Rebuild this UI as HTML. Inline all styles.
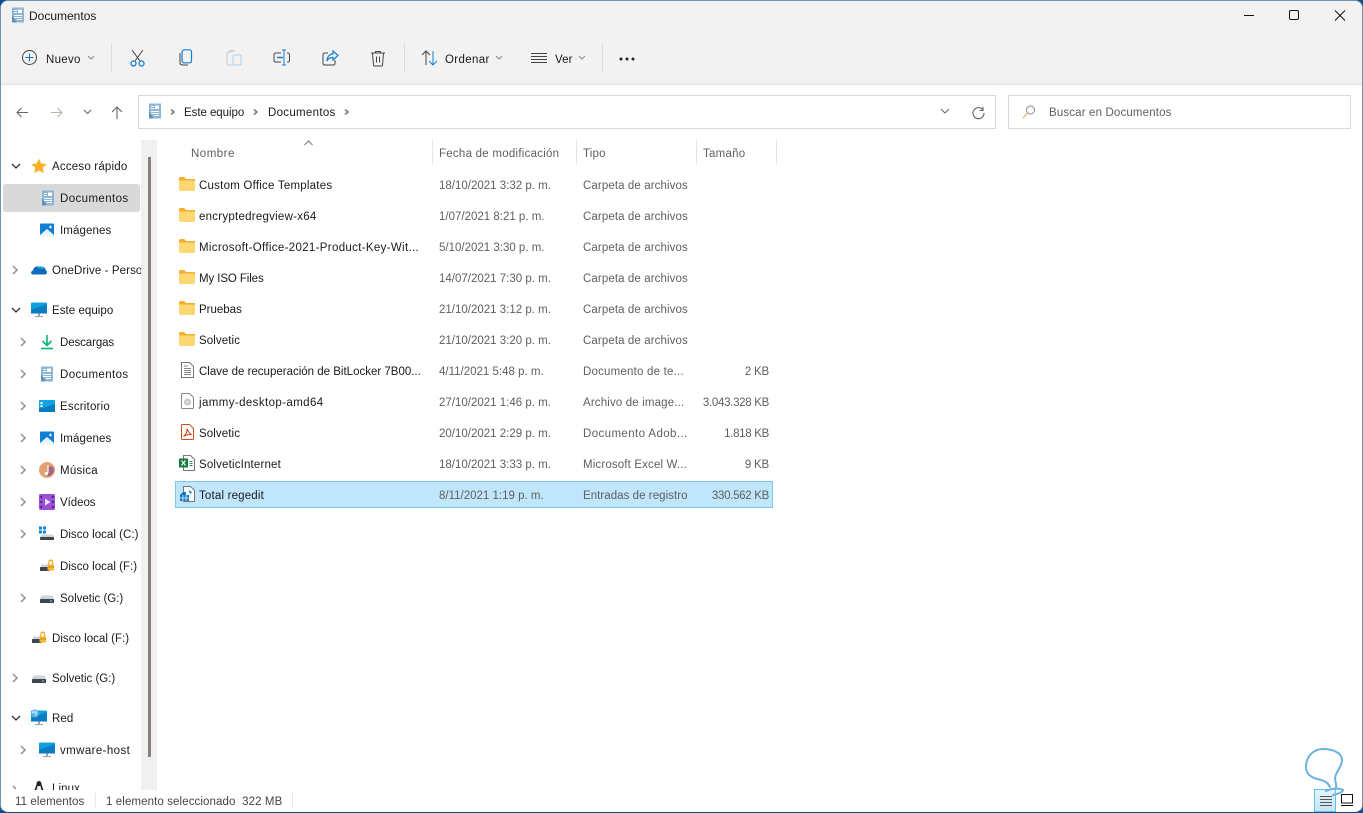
<!DOCTYPE html>
<html><head><meta charset="utf-8"><title>Documentos</title>
<style>
html,body{margin:0;padding:0;width:1363px;height:813px;overflow:hidden;background:#0b4f8f}
body{position:relative;font-family:"Liberation Sans",sans-serif;font-size:11.5px;color:#1a1a1a}
#win{position:absolute;left:0;top:0;width:1361px;height:811px;background:#fff;border:1px solid #6f93ad;border-bottom:1px solid #0b4f8f;border-radius:8px;overflow:hidden}
.a{position:absolute}
.t{position:absolute;white-space:nowrap;line-height:16px;height:16px;margin-top:1px;letter-spacing:.1px}
.g{color:#5f5f5f}
.d{letter-spacing:0}
svg{position:absolute;overflow:visible}
</style></head><body>
<svg width="0" height="0" style="position:absolute"><defs>
<symbol id="doc" viewBox="0 0 16 16"><path d="M2 .5h12v15H4.500L2 13z" fill="#8db6d6"/><path d="M2 8l4.500 7.500H2z" fill="#5e8fb5"/><path d="M8 2.500h4v3.500H8zM4 3h3v1H4zM4 5h3v1H4zM4 8h8v1H4zM4 10h8v1H4zM7 12h5v1H7z" fill="#fff"/></symbol>
<symbol id="img" viewBox="0 0 16 16"><rect x="1" y="1.500" width="14" height="13" rx="1" fill="#0f7fd6"/><path d="M1 13l7-6 7 6v1.500H1z" fill="#e8f4fc"/><path d="M11.500 3l.6 1.400 1.400.6-1.400.6-.6 1.400-.6-1.400-1.400-.6 1.400-.6z" fill="#fff"/></symbol>
<symbol id="folder" viewBox="0 0 16 16"><path d="M0 2.500C0 1.700.6 1 1.400 1h3.800l1.800 2H16v2H0z" fill="#f2b02c"/><path d="M0 4.500h14.500c.8 0 1.500.7 1.500 1.500v7.500c0 .8-.7 1.500-1.500 1.500h-13C.7 15 0 14.300 0 13.500z" fill="#fcd772"/></symbol>
<symbol id="chevR" viewBox="0 0 8 10"><path d="M2 1l4 4-4 4" fill="none" stroke="#909090" stroke-width="1.500"/></symbol>
<symbol id="chevS" viewBox="0 0 8 10"><path d="M2 2.500l3 2.500-3 2.500" fill="none" stroke="#777" stroke-width="1.500"/></symbol>
<symbol id="chevD" viewBox="0 0 10 8"><path d="M1 2l4 4 4-4" fill="none" stroke="#333" stroke-width="1.300"/></symbol>
<symbol id="small" viewBox="0 0 8 6"><path d="M1 1l3 3 3-3" fill="none" stroke="#8a8a8a" stroke-width="1"/></symbol>
<symbol id="drive" viewBox="0 0 16 16"><path d="M2.500 5.500h11L15 9v1H1V9z" fill="#cfd4d8"/><rect x="1" y="9" width="14" height="4" rx=".8" fill="#3a4750"/><rect x="11" y="10.500" width="2" height="1" fill="#9fe0a8"/></symbol>
<symbol id="mon" viewBox="0 0 18 18"><rect x="1" y="1.500" width="16" height="11" rx="1" fill="#13a0dd"/><path d="M1 9l16-6v9.500H1z" fill="#0a7cc4"/><path d="M8 12.500h2V15H8z" fill="#9aa5ad"/><path d="M5 15h8v1H5z" fill="#9aa5ad"/></symbol>
<symbol id="lockdrive" viewBox="0 0 16 16"><path d="M3 6.500h7v3H1z" fill="#cfd4d8"/><rect x="1" y="9" width="10" height="4" rx=".8" fill="#3a4750"/><path d="M8.500 6.500h6.500v6H8.500z" fill="#f5b82e"/><path d="M10 6.500V3.500a1.800 1.800 0 0 1 3.500 0v3" fill="none" stroke="#e5a51a" stroke-width="1.200"/><path d="M9 9h6" stroke="#c48a10"/></symbol>
</defs></svg>

<div id="win">
<div class="a" style="left:0;top:0;width:1361px;height:83px;background:#f2f2f2;border-bottom:1px solid #e2e2e2"></div>
</div>
<div class="a" style="left:0;top:0;width:1363px;height:813px">

<!-- title -->
<svg style="left:10px;top:7px" width="16" height="16"><use href="#doc"/></svg>
<div class="t" style="left:29px;top:7px;font-size:12px;letter-spacing:0">Documentos</div>
<svg style="left:1241px;top:10px" width="110" height="12"><path d="M3 5.500h10" stroke="#111" stroke-width="1"/><rect x="48.500" y=".5" width="9" height="9" rx="1.500" fill="none" stroke="#111"/><path d="M94 .5l10 10M104 .5l-10 10" stroke="#111" stroke-width="1"/></svg>

<!-- toolbar -->
<svg style="left:22px;top:50px" width="16" height="16"><circle cx="7.500" cy="7.500" r="7" fill="none" stroke="#444"/><path d="M7.500 3.500v8M3.500 7.500h8" stroke="#1872c4"/></svg>
<div class="t" style="left:46px;top:51px;letter-spacing:.3px">Nuevo</div>
<svg style="left:87px;top:55px" width="8" height="6"><use href="#small"/></svg>
<div class="a" style="left:111px;top:43px;width:1px;height:30px;background:#dcdcdc"></div>
<svg style="left:130px;top:49px" width="16" height="20"><path d="M2 1l8 11M13 1L5 12" stroke="#444" fill="none"/><circle cx="3.500" cy="14.500" r="2.500" fill="none" stroke="#1580d6" stroke-width="1.300"/><circle cx="11.500" cy="14.500" r="2.500" fill="none" stroke="#1580d6" stroke-width="1.300"/></svg>
<svg style="left:179px;top:49px" width="14" height="18"><rect x="3" y=".8" width="9.500" height="13" rx="2" fill="none" stroke="#1580d6" stroke-width="1.200"/><path d="M1 4v9.500c0 1.500 1 2.500 2.500 2.500H9" fill="none" stroke="#444"/></svg>
<svg style="left:226px;top:49px" width="16" height="18"><path d="M7 3H2.500C1.700 3 1 3.700 1 4.500v10c0 .8.700 1.500 1.500 1.500H6" fill="none" stroke="#c9c9c9"/><path d="M3 3c0-2 6-2 6 0" fill="none" stroke="#c9c9c9"/><rect x="7" y="6" width="8" height="10" rx="1.500" fill="none" stroke="#a8d0ef"/></svg>
<svg style="left:273px;top:49px" width="18" height="18"><path d="M8 4H2.500C1.700 4 1 4.700 1 5.500v6c0 .8.700 1.500 1.500 1.500H8M14 4h1c.8 0 1.500.7 1.500 1.500v6c0 .8-.7 1.500-1.500 1.500h-1" fill="none" stroke="#444"/><path d="M4 8.500h6" stroke="#1580d6" stroke-width="1.500"/><path d="M9 1h4M11 1v15M9 16h4" stroke="#1580d6" fill="none"/></svg>
<svg style="left:322px;top:50px" width="17" height="17"><path d="M6 3H2.500C1.700 3 1 3.700 1 4.500v9c0 .8.700 1.500 1.500 1.500h9c.8 0 1.500-.7 1.500-1.500V10" fill="none" stroke="#444"/><path d="M11 1l5 4.500-5 4.500V7.500C8 7.500 6 8.500 5 11c0-4 2.500-7 6-7z" fill="none" stroke="#1580d6" stroke-width="1.200"/></svg>
<svg style="left:370px;top:50px" width="16" height="17"><path d="M1 3h14M5.500 3V1.500h5V3" fill="none" stroke="#444"/><path d="M2.500 3l1 12c0 .6.500 1 1 1h7c.5 0 1-.4 1-1l1-12" fill="none" stroke="#444"/><path d="M6.500 6.500v6M9.500 6.500v6" stroke="#444"/></svg>
<div class="a" style="left:404px;top:43px;width:1px;height:30px;background:#dcdcdc"></div>
<svg style="left:421px;top:50px" width="17" height="16"><path d="M5 15V1M1 5l4-4 4 4" fill="none" stroke="#444"/><path d="M12 1v14M8 11l4 4 4-4" fill="none" stroke="#1580d6"/></svg>
<div class="t" style="left:445px;top:51px;letter-spacing:.35px">Ordenar</div>
<svg style="left:495px;top:55px" width="8" height="6"><use href="#small"/></svg>
<svg style="left:531px;top:53px" width="16" height="11"><path d="M0 .5h16M0 3.500h16M0 6.500h16M0 9.500h16" stroke="#444"/></svg>
<div class="t" style="left:555px;top:51px">Ver</div>
<svg style="left:578px;top:55px" width="8" height="6"><use href="#small"/></svg>
<div class="a" style="left:602px;top:43px;width:1px;height:30px;background:#dcdcdc"></div>
<svg style="left:619px;top:57px" width="16" height="4"><circle cx="2" cy="2" r="1.500" fill="#222"/><circle cx="8" cy="2" r="1.500" fill="#222"/><circle cx="14" cy="2" r="1.500" fill="#222"/></svg>

<!-- nav -->
<svg style="left:16px;top:107px" width="12" height="11"><path d="M12 5.500H1M5.500 1L1 5.500 5.500 10" fill="none" stroke="#666" stroke-width="1.100"/></svg>
<svg style="left:51px;top:107px" width="12" height="11"><path d="M0 5.500h11M6.500 1L11 5.500 6.500 10" fill="none" stroke="#b5b5a8" stroke-width="1.100"/></svg>
<svg style="left:83px;top:109px" width="9" height="6"><path d="M1 1l3.500 3.500L8 1" fill="none" stroke="#666" stroke-width="1.100"/></svg>
<svg style="left:111px;top:106px" width="12" height="13"><path d="M6 13V1M1 6L6 1l5 5" fill="none" stroke="#666" stroke-width="1.100"/></svg>
<div class="a" style="left:138px;top:95px;width:856px;height:32px;background:#fff;border:1px solid #d9d9d9"></div>
<svg style="left:147px;top:103px" width="16" height="16"><use href="#doc"/></svg>
<svg style="left:169px;top:107px" width="8" height="10"><use href="#chevS"/></svg>
<div class="t" style="left:184px;top:104px;letter-spacing:-.05px">Este equipo</div>
<svg style="left:252px;top:107px" width="8" height="10"><use href="#chevS"/></svg>
<div class="t" style="left:268px;top:104px;letter-spacing:.3px">Documentos</div>
<svg style="left:343px;top:107px" width="8" height="10"><use href="#chevS"/></svg>
<svg style="left:940px;top:108px" width="10" height="7"><path d="M1 1l4 4 4-4" fill="none" stroke="#666"/></svg>
<svg style="left:972px;top:105px" width="13" height="13"><path d="M11 2v3.500H7.500M11 5A5.500 5.500 0 1 0 12 8" fill="none" stroke="#666" stroke-width="1.100"/></svg>
<div class="a" style="left:1008px;top:95px;width:341px;height:32px;background:#fff;border:1px solid #d9d9d9"></div>
<svg style="left:1022px;top:105px" width="14" height="14"><circle cx="8.500" cy="5" r="4" fill="none" stroke="#888"/><path d="M5.500 8L1 13" stroke="#d9b463" stroke-width="1.200"/></svg>
<div class="t g" style="left:1049px;top:104px;letter-spacing:.15px">Buscar en Documentos</div>

<!-- sidebar selection and scrollbar -->
<div class="a" style="left:3px;top:184px;width:137px;height:28px;background:#d9d9d9;border-radius:3px"></div>
<div class="a" style="left:141px;top:140px;width:16px;height:650px;background:#f0f0f0"></div>
<div class="a" style="left:148px;top:157px;width:3px;height:600px;background:#8a7f7c"></div>

<!-- sidebar rows -->
<svg style="left:11px;top:162px" width="10" height="8"><use href="#chevD"/></svg>
<svg style="left:31px;top:158px" width="16" height="16" viewBox="0 0 16 16"><path d="M8 .5l2.300 5 5.400.6-4 3.700 1.100 5.400L8 12.500l-4.800 2.700 1.100-5.400-4-3.700 5.400-.6z" fill="#fbb125"/></svg>
<div class="t" style="left:52px;top:158px;letter-spacing:.2px">Acceso rápido</div>
<svg style="left:40px;top:190px" width="16" height="16"><use href="#doc"/></svg>
<div class="t" style="left:60px;top:190px;letter-spacing:.4px">Documentos</div>
<svg style="left:39px;top:222px" width="16" height="16"><use href="#img"/></svg>
<div class="t" style="left:60px;top:222px">Imágenes</div>

<svg style="left:11px;top:265px" width="8" height="10"><use href="#chevR"/></svg>
<svg style="left:30px;top:262px" width="18" height="14" viewBox="0 0 18 14"><path d="M3 12.500C.5 12.500.5 9 3 8.500 3.500 5 7 3 10 5c3-1 6 1 5.500 3 2 .5 2 4.500-.5 4.500z" fill="#0f6cbd"/><path d="M7 6c2-3 6-2 7 1" fill="#28a8ea"/></svg>
<div class="t" style="left:52px;top:262px;width:89px;overflow:hidden">OneDrive - Personal</div>

<svg style="left:11px;top:306px" width="10" height="8"><use href="#chevD"/></svg>
<svg style="left:30px;top:301px" width="18" height="18"><use href="#mon"/></svg>
<div class="t" style="left:52px;top:302px;letter-spacing:.05px">Este equipo</div>

<svg style="left:19px;top:337px" width="8" height="10"><use href="#chevR"/></svg>
<svg style="left:39px;top:334px" width="16" height="16" viewBox="0 0 16 16"><path d="M8 1v10M3.500 7L8 11.500 12.500 7" fill="none" stroke="#0eb27a" stroke-width="1.600"/><path d="M2 14.500h12" stroke="#0eb27a" stroke-width="1.600"/></svg>
<div class="t" style="left:60px;top:334px;letter-spacing:-.1px">Descargas</div>

<svg style="left:19px;top:369px" width="8" height="10"><use href="#chevR"/></svg>
<svg style="left:39px;top:366px" width="16" height="16"><use href="#doc"/></svg>
<div class="t" style="left:60px;top:366px;letter-spacing:.4px">Documentos</div>

<svg style="left:19px;top:401px" width="8" height="10"><use href="#chevR"/></svg>
<svg style="left:39px;top:398px" width="16" height="16" viewBox="0 0 16 16"><rect y="2" width="16" height="12" rx="1" fill="#11a5e0"/><path d="M0 11l16-5v8H0z" fill="#0a7ac0"/><path d="M1.500 4h2v2h-2zM1.500 7h2v2h-2z" fill="#fff"/></svg>
<div class="t" style="left:60px;top:398px;letter-spacing:.2px">Escritorio</div>

<svg style="left:19px;top:433px" width="8" height="10"><use href="#chevR"/></svg>
<svg style="left:39px;top:430px" width="16" height="16"><use href="#img"/></svg>
<div class="t" style="left:60px;top:430px">Imágenes</div>

<svg style="left:19px;top:465px" width="8" height="10"><use href="#chevR"/></svg>
<svg style="left:39px;top:462px" width="16" height="16"><circle cx="8" cy="8" r="8" fill="#e2a274"/><path d="M8 14A6 6 0 0 0 14 5L10 4 8 10z" fill="#a5657f"/><path d="M9 3.500v7.500" stroke="#fff" stroke-width="1.200"/><circle cx="7.500" cy="11.500" r="1.600" fill="#fff"/></svg>
<div class="t" style="left:60px;top:462px;letter-spacing:.25px">Música</div>

<svg style="left:19px;top:497px" width="8" height="10"><use href="#chevR"/></svg>
<svg style="left:39px;top:494px" width="16" height="16"><rect width="16" height="16" rx="1.500" fill="#9b4fd8"/><path d="M6 4.500l5.500 3.500L6 11.500z" fill="#f2e4ff"/><path d="M1.500 2h1.500v2H1.500zM1.500 7h1.500v2H1.500zM1.500 12h1.500v2H1.500zM13 2h1.500v2H13zM13 7h1.500v2H13zM13 12h1.500v2H13z" fill="#3c1a63"/></svg>
<div class="t" style="left:60px;top:494px;letter-spacing:-.05px">Vídeos</div>

<svg style="left:19px;top:529px" width="8" height="10"><use href="#chevR"/></svg>
<svg style="left:39px;top:526px" width="16" height="16" viewBox="0 0 16 16"><path d="M0 .5h3v3H0zM4 .5h3v3H4zM0 4.500h3v3H0zM4 4.500h3v3H4z" fill="#0f86d6"/><path d="M3 8.500h10L15 11v1H1v-1z" fill="#cfd4d8"/><rect x="1" y="11" width="14" height="3" rx=".8" fill="#3a4750"/></svg>
<div class="t" style="left:60px;top:526px;letter-spacing:.03px">Disco local (C:)</div>

<svg style="left:39px;top:558px" width="16" height="16"><use href="#lockdrive"/></svg>
<div class="t" style="left:60px;top:558px;letter-spacing:.03px">Disco local (F:)</div>

<svg style="left:19px;top:593px" width="8" height="10"><use href="#chevR"/></svg>
<svg style="left:39px;top:590px" width="16" height="16"><use href="#drive"/></svg>
<div class="t" style="left:60px;top:590px;letter-spacing:0">Solvetic (G:)</div>

<svg style="left:31px;top:630px" width="16" height="16"><use href="#lockdrive"/></svg>
<div class="t" style="left:52px;top:630px;letter-spacing:.03px">Disco local (F:)</div>

<svg style="left:11px;top:673px" width="8" height="10"><use href="#chevR"/></svg>
<svg style="left:31px;top:670px" width="16" height="16"><use href="#drive"/></svg>
<div class="t" style="left:52px;top:670px;letter-spacing:0">Solvetic (G:)</div>

<svg style="left:11px;top:714px" width="10" height="8"><use href="#chevD"/></svg>
<svg style="left:30px;top:709px" width="18" height="18"><use href="#mon"/><circle cx="5" cy="4.500" r="4" fill="#5fb4ec"/><path d="M2 3c2 1 3-1 4 0s-1 2 0 3" fill="none" stroke="#fff"/></svg>
<div class="t" style="left:52px;top:710px">Red</div>

<svg style="left:19px;top:745px" width="8" height="10"><use href="#chevR"/></svg>
<svg style="left:38px;top:741px" width="18" height="18"><use href="#mon"/></svg>
<div class="t" style="left:60px;top:742px;letter-spacing:.4px">vmware-host</div>

<svg style="left:11px;top:785px" width="8" height="5" viewBox="0 0 8 5"><path d="M2 1l3 3" fill="none" stroke="#8a8a8a" stroke-width="1.300"/></svg>
<svg style="left:33px;top:781px" width="12" height="9" viewBox="0 0 12 9"><path d="M6 0c2 0 2.500 2 2.500 3.500L10.500 9h-9l2-5.500C3.500 2 4 0 6 0z" fill="#222"/><path d="M4.500 5h3l1 4h-5z" fill="#eee"/></svg>
<div class="a" style="left:52px;top:781px;width:40px;height:9px;overflow:hidden"><div class="t" style="left:0;top:0;margin-top:0">Linux</div></div>

<!-- status bar cover -->
<div class="a" style="left:1px;top:790px;width:1361px;height:21px;background:#fff;border-radius:0 0 7px 7px"></div>
<div class="t" style="left:15px;top:793px;color:#444">11 elementos</div>
<div class="a" style="left:95px;top:793px;width:1px;height:15px;background:#e8e8e8"></div>
<div class="t" style="left:106px;top:793px;color:#444">1 elemento seleccionado&nbsp; 322 MB</div>
<div class="a" style="left:292px;top:793px;width:1px;height:15px;background:#e8e8e8"></div>

<!-- column headers -->
<svg style="left:304px;top:140px" width="9" height="6"><path d="M.5 5L4.500 1l4 4" fill="none" stroke="#777"/></svg>
<div class="t g" style="left:191px;top:145px;letter-spacing:.5px">Nombre</div>
<div class="a" style="left:432px;top:140px;width:1px;height:25px;background:#e5e5e5"></div>
<div class="t g" style="left:439px;top:145px;letter-spacing:.25px">Fecha de modificación</div>
<div class="a" style="left:576px;top:140px;width:1px;height:25px;background:#e5e5e5"></div>
<div class="t g" style="left:583px;top:145px;letter-spacing:.2px">Tipo</div>
<div class="a" style="left:696px;top:140px;width:1px;height:25px;background:#e5e5e5"></div>
<div class="t g" style="left:703px;top:145px;letter-spacing:.25px">Tamaño</div>
<div class="a" style="left:776px;top:140px;width:1px;height:25px;background:#e5e5e5"></div>

<!-- selected row -->
<div class="a" style="left:175px;top:481px;width:596px;height:25px;background:#c0e6fc;border:1px solid #7cc6f3"></div>

<!-- file rows -->
<svg style="left:179px;top:176px" width="16" height="16"><use href="#folder"/></svg>
<div class="t" style="left:199px;top:177px;letter-spacing:.23px">Custom Office Templates</div>
<div class="t g d" style="left:439px;top:177px">18/10/2021 3:32 p. m.</div>
<div class="t g" style="left:583px;top:177px">Carpeta de archivos</div>

<svg style="left:179px;top:207px" width="16" height="16"><use href="#folder"/></svg>
<div class="t" style="left:199px;top:208px;letter-spacing:.25px">encryptedregview-x64</div>
<div class="t g d" style="left:439px;top:208px">1/07/2021 8:21 p. m.</div>
<div class="t g" style="left:583px;top:208px">Carpeta de archivos</div>

<svg style="left:179px;top:238px" width="16" height="16"><use href="#folder"/></svg>
<div class="t" style="left:199px;top:239px;letter-spacing:.33px">Microsoft-Office-2021-Product-Key-Wit...</div>
<div class="t g d" style="left:439px;top:239px">5/10/2021 3:30 p. m.</div>
<div class="t g" style="left:583px;top:239px">Carpeta de archivos</div>

<svg style="left:179px;top:269px" width="16" height="16"><use href="#folder"/></svg>
<div class="t" style="left:199px;top:270px;letter-spacing:-.1px">My ISO Files</div>
<div class="t g d" style="left:439px;top:270px">14/07/2021 7:30 p. m.</div>
<div class="t g" style="left:583px;top:270px">Carpeta de archivos</div>

<svg style="left:179px;top:300px" width="16" height="16"><use href="#folder"/></svg>
<div class="t" style="left:199px;top:301px;letter-spacing:0">Pruebas</div>
<div class="t g d" style="left:439px;top:301px">21/10/2021 3:12 p. m.</div>
<div class="t g" style="left:583px;top:301px">Carpeta de archivos</div>

<svg style="left:179px;top:331px" width="16" height="16"><use href="#folder"/></svg>
<div class="t" style="left:199px;top:332px">Solvetic</div>
<div class="t g d" style="left:439px;top:332px">21/10/2021 3:20 p. m.</div>
<div class="t g" style="left:583px;top:332px">Carpeta de archivos</div>

<svg style="left:181px;top:362px" width="13" height="16"><path d="M.5.500h8l4 4v11H.5z" fill="#fff" stroke="#777"/><path d="M3 4h4M3 6.500h7M3 8.500h7M3 10.500h7M3 12.500h7" stroke="#888"/></svg>
<div class="t" style="left:199px;top:363px;letter-spacing:0">Clave de recuperación de BitLocker 7B00...</div>
<div class="t g d" style="left:439px;top:363px">4/11/2021 5:48 p. m.</div>
<div class="t g" style="left:583px;top:363px;letter-spacing:.2px">Documento de te...</div>
<div class="t g" style="left:700px;top:363px;width:69px;text-align:right;letter-spacing:-.2px">2 KB</div>

<svg style="left:181px;top:393px" width="13" height="16"><path d="M.5 1.500Q.5.500 1.500.500h7l4 4v10q0 1-1 1h-10q-1 0-1-1z" fill="#fff" stroke="#888"/><circle cx="6.500" cy="9" r="3.500" fill="#c8c8c8"/><circle cx="6.500" cy="9" r="1" fill="#f4f4f4"/></svg>
<div class="t" style="left:199px;top:394px;letter-spacing:.4px">jammy-desktop-amd64</div>
<div class="t g d" style="left:439px;top:394px">27/10/2021 1:46 p. m.</div>
<div class="t g" style="left:583px;top:394px;letter-spacing:.15px">Archivo de image...</div>
<div class="t g" style="left:680px;top:394px;width:89px;text-align:right;letter-spacing:-.3px">3.043.328 KB</div>

<svg style="left:181px;top:424px" width="13" height="16"><path d="M.5 1.500Q.5.500 1.500.500h7l4 4v10q0 1-1 1h-10q-1 0-1-1z" fill="#fff" stroke="#c9501c"/><path d="M2.500 12.500C5 11 6.500 7 6 4.500c1 3 2.500 5 4.500 6-2.500-.3-5 .3-8 2z" fill="none" stroke="#c9401c"/></svg>
<div class="t" style="left:199px;top:425px">Solvetic</div>
<div class="t g d" style="left:439px;top:425px">20/10/2021 2:29 p. m.</div>
<div class="t g" style="left:583px;top:425px;letter-spacing:.4px">Documento Adob...</div>
<div class="t g" style="left:700px;top:425px;width:69px;text-align:right;letter-spacing:-.3px">1.818 KB</div>

<svg style="left:179px;top:455px" width="16" height="16"><path d="M4.500.500h7l4 4v11h-11z" fill="#fff" stroke="#777"/><rect x="0" y="3.500" width="9" height="9" fill="#107c41"/><path d="M2.500 5.500l4 5M6.500 5.500l-4 5" stroke="#fff" stroke-width="1.200"/><path d="M10.500 6.500h3M10.500 8.500h3M10.500 10.500h3" stroke="#2a9a5f"/></svg>
<div class="t" style="left:199px;top:456px;letter-spacing:.17px">SolveticInternet</div>
<div class="t g d" style="left:439px;top:456px">18/10/2021 3:33 p. m.</div>
<div class="t g" style="left:583px;top:456px;letter-spacing:.15px">Microsoft Excel W...</div>
<div class="t g" style="left:700px;top:456px;width:69px;text-align:right;letter-spacing:-.2px">9 KB</div>

<svg style="left:180px;top:486px" width="15" height="16"><path d="M3.500.500h7l4 4v11h-11z" fill="#fff" stroke="#777"/><path d="M0 9l3-3 3 0v3h3v6H0z" fill="#1476c6"/><path d="M3 9v6M6 9v6M0 12h9" stroke="#bfe0f5"/><path d="M9 4l3 2-2 2z" fill="#1476c6"/></svg>
<div class="t" style="left:199px;top:487px;letter-spacing:.18px">Total regedit</div>
<div class="t g d" style="left:439px;top:487px">8/11/2021 1:19 p. m.</div>
<div class="t g" style="left:583px;top:487px;letter-spacing:.05px">Entradas de registro</div>
<div class="t g" style="left:680px;top:487px;width:89px;text-align:right;letter-spacing:-.3px">330.562 KB</div>

<!-- view toggle and watermark -->
<div class="a" style="left:1314px;top:789px;width:20px;height:21px;background:linear-gradient(#e4f2fa,#c6e4f5);border:1px solid #5dc3ec"></div>
<svg style="left:1320px;top:796px" width="13" height="11"><path d="M0 .5h12M0 3.500h12M0 6.500h12M0 9.500h12" stroke="#555"/></svg>
<svg style="left:1341px;top:794px" width="13" height="13"><rect x=".5" y=".5" width="11" height="8.500" fill="#fff" stroke="#111"/><path d="M0 11.500h12" stroke="#111"/></svg>
<svg style="left:1300px;top:745px" width="50" height="52" viewBox="0 0 50 52"><path d="M30 42C27 36 22 35 17 34 10 32 6 28 6 22 6 11 14 4 23 4 33 4 42 8 42 15 42 22 36 26 35 33 35 37 37 40 36 42M26 46C32 43 40 43 43 45 43 47 38 49 33 50" fill="none" stroke="#6bb3df" stroke-width="2" stroke-linecap="round"/></svg>
</div>
</body></html>
